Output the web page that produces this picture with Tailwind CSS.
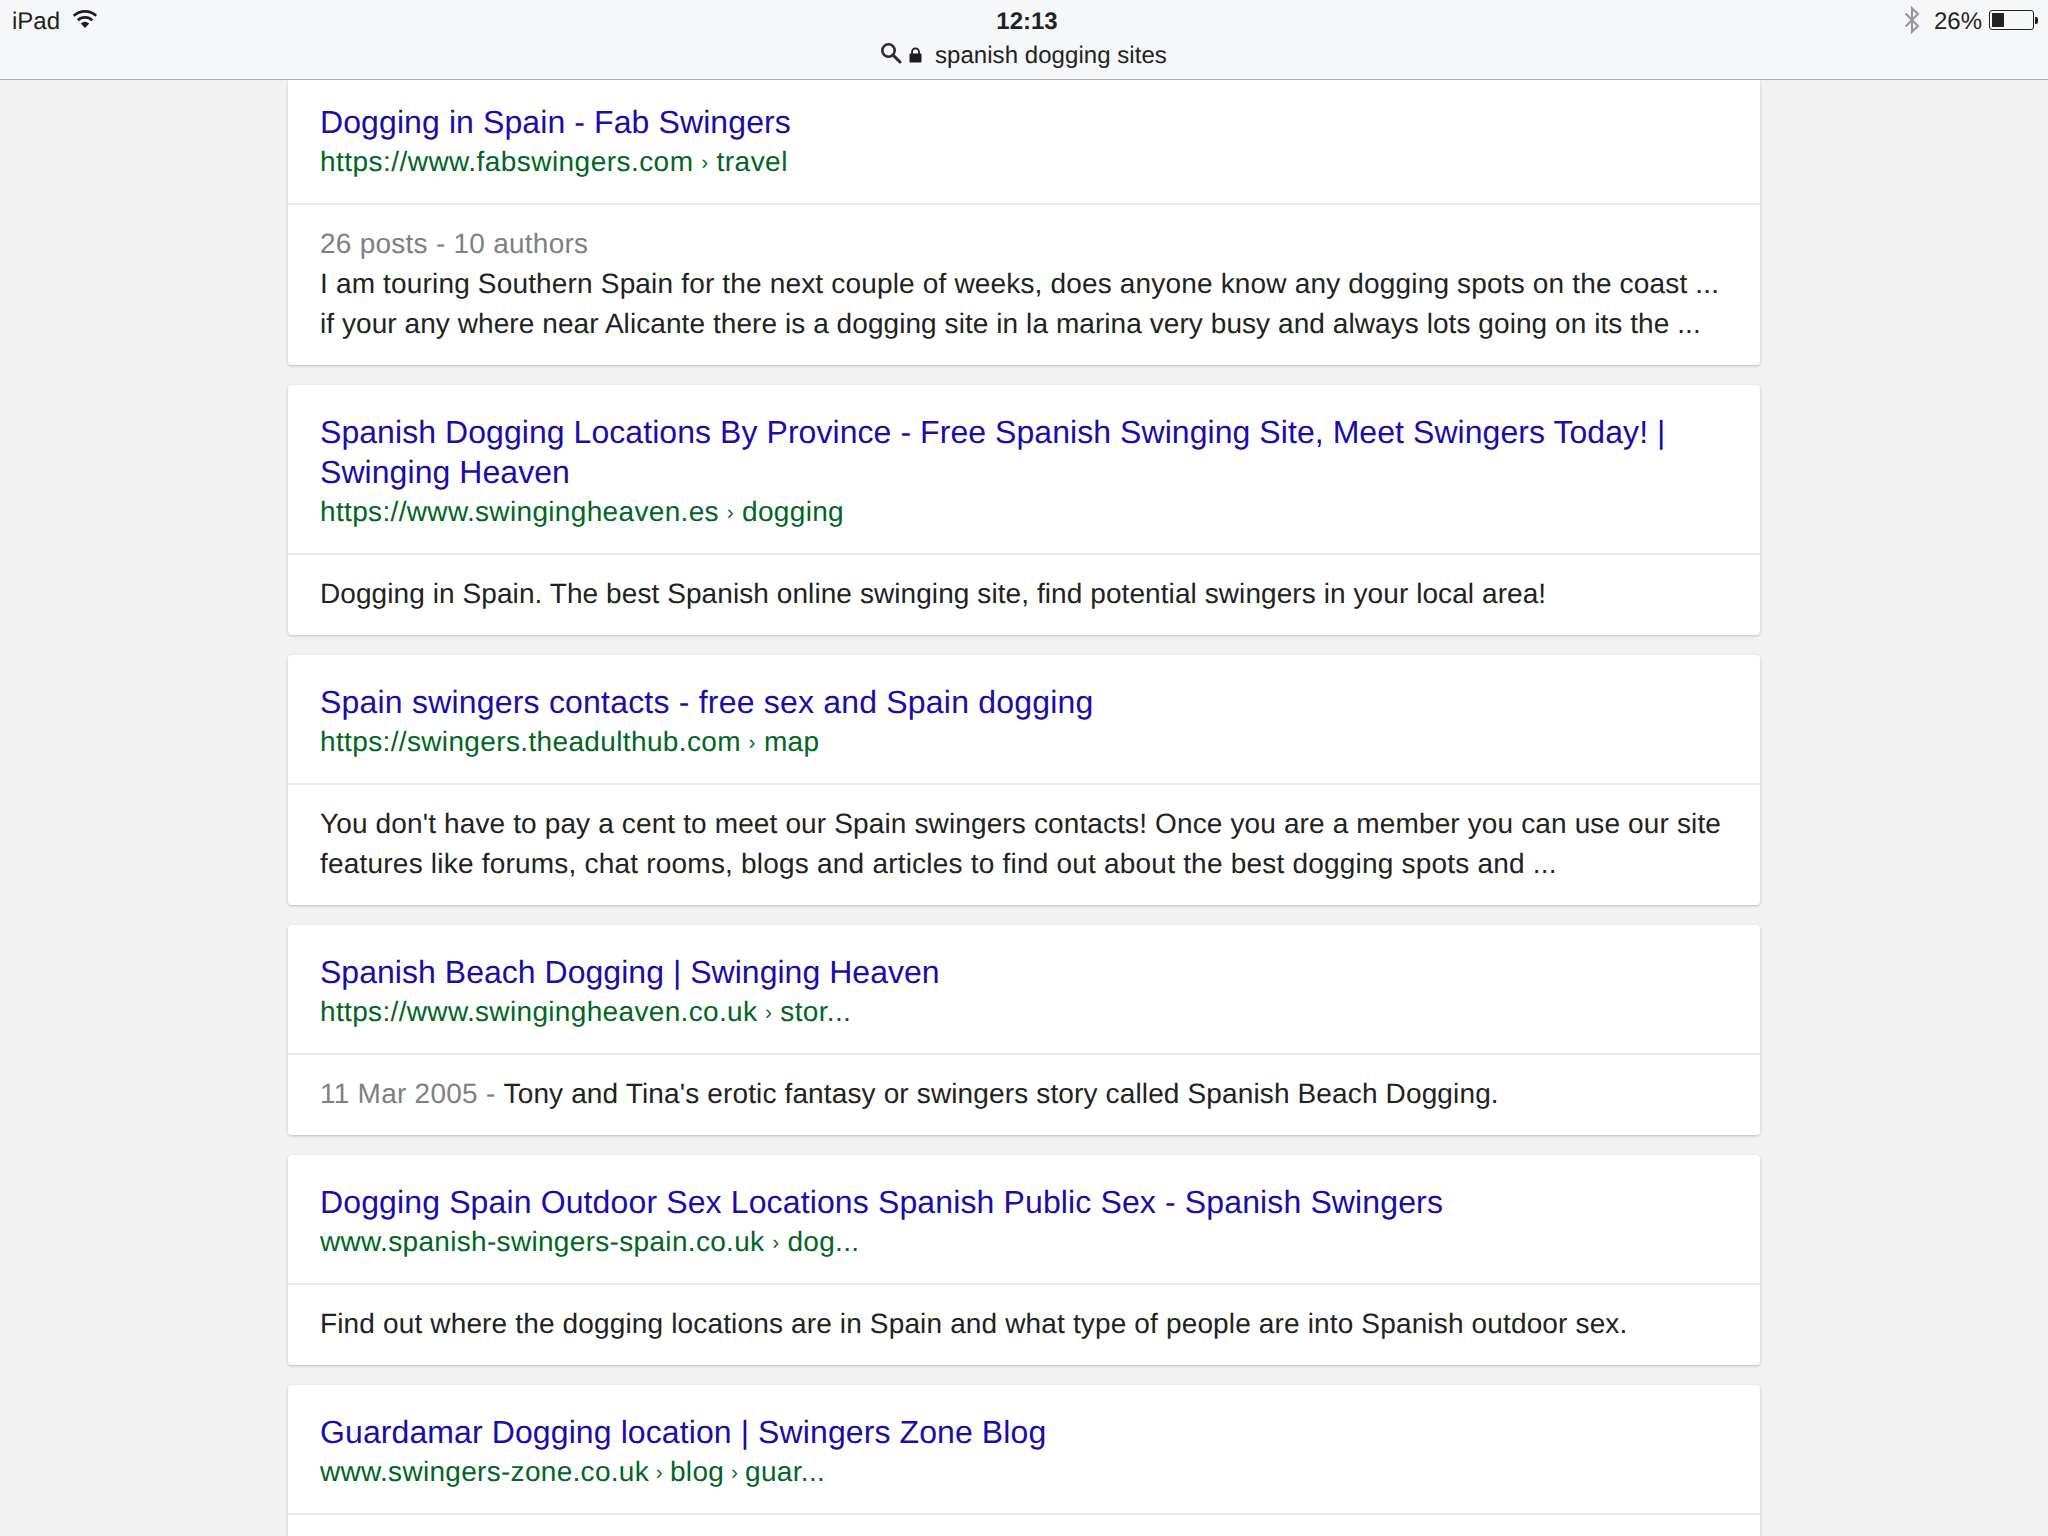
<!DOCTYPE html>
<html><head><meta charset="utf-8"><script src="https://cdn.jsdelivr.net/npm/@tailwindcss/browser@4"></script></head>
<body class="m-0">
<div class="w-[2048px] h-[1536px] overflow-hidden bg-[#f2f2f2] flex flex-col font-['Liberation_Sans',Arial,sans-serif] text-[28px] leading-[40px] text-[#222222] [text-rendering:geometricPrecision]">
<header class="relative shrink-0 h-[80px] bg-[#f6f7f8] border-b border-[#aeaeb0]">
  <div class="absolute left-[12px] top-[2px] flex items-center gap-[12px] text-[24px] leading-[40px]"><span>iPad</span>
    <svg class="mb-[6px]" width="26" height="20" viewBox="0 0 26 20"><path d="M13 19 L8.8 14.5 A6.5 6.5 0 0 1 17.2 14.5 Z" fill="#1d1d1f"/><path d="M5.8 11.2 A10.5 10.5 0 0 1 20.2 11.2" fill="none" stroke="#1d1d1f" stroke-width="2.7"/><path d="M1.8 6.8 A16.5 16.5 0 0 1 24.2 6.8" fill="none" stroke="#1d1d1f" stroke-width="2.7"/></svg></div>
  <div class="absolute left-0 right-0 top-[2px] pl-[6px] text-center text-[24px] font-bold leading-[40px]">12:13</div>
  <div class="absolute left-[880px] top-[36px] flex items-center text-[24px] leading-[40px]">
    <svg class="mb-[6px]" width="22" height="22" viewBox="0 0 22 22"><circle cx="8.5" cy="8.5" r="6.2" fill="none" stroke="#2a2a2c" stroke-width="2.6"/><path d="M13 13 L20 20" stroke="#2a2a2c" stroke-width="3" stroke-linecap="round"/></svg>
    <svg class="ml-[7px] mb-[3px]" width="13" height="16" viewBox="0 0 13 16"><path d="M3 7 V4.8 A3.5 3.5 0 0 1 10 4.8 V7" fill="none" stroke="#1d1d1f" stroke-width="1.8"/><rect x="0.5" y="6.5" width="12" height="9" rx="1" fill="#1d1d1f"/></svg>
    <span class="ml-[13px] tracking-[0.05px]">spanish dogging sites</span></div>
  <div class="absolute right-[10px] top-[2px] flex items-center text-[24px] leading-[40px]">
    <svg class="mb-[4px]" width="18" height="30" viewBox="0 0 16 28"><path d="M2 8 L13.5 19.5 L8 25 V3 L13.5 8.5 L2 20" fill="none" stroke="#98989a" stroke-width="2"/></svg>
    <span class="ml-[13px]">26%</span>
    <div class="ml-[7px] mb-[4px] flex items-center"><div class="w-[45px] h-[20px] rounded-[3px] border border-[#222] p-[2px] bg-[#f6f7f8]"><div class="h-full w-[12px] bg-[#222]"></div></div><div class="ml-[1px] w-[3px] h-[7px] rounded-r-[2px] bg-[#222]"></div></div>
  </div>
</header>
<main class="w-[1472px] ml-[288px] flex flex-col gap-[20px]">
  <section class="bg-white rounded-b-[4px] shadow-[0_1px_3px_rgba(0,0,0,0.22)]">
    <div class="px-[32px] pt-[22px] pb-[21px] border-b-2 border-[#ebebeb]"><a class="block text-[#1a0dab] text-[32px] tracking-[0.1px]">Dogging in Spain - Fab Swingers</a><div class="text-[#006621] tracking-[0.46px]">https://www.fabswingers.com<span class="text-[20px] leading-[0] align-[2px] mx-[8px]">›</span>travel</div></div>
    <div class="px-[32px] pt-[19px] pb-[21px]"><div class="text-[#808080] tracking-[0.25px]">26 posts - 10 authors</div><p class="tracking-[0.17px]">I am touring Southern Spain for the next couple of weeks, does anyone know any dogging spots on the coast ...</p><p class="tracking-[0.07px]">if your any where near Alicante there is a dogging site in la marina very busy and always lots going on its the ...</p></div>
  </section>
  <section class="bg-white rounded-[4px] shadow-[0_1px_3px_rgba(0,0,0,0.22)]">
    <div class="px-[32px] pt-[27px] pb-[21px] border-b-2 border-[#ebebeb]"><a class="block text-[#1a0dab] text-[32px] tracking-[0.06px]">Spanish Dogging Locations By Province - Free Spanish Swinging Site, Meet Swingers Today! | Swinging Heaven</a><div class="text-[#006621] tracking-[0.34px]">https://www.swingingheaven.es<span class="text-[20px] leading-[0] align-[2px] mx-[8px]">›</span>dogging</div></div>
    <div class="px-[32px] pt-[19px] pb-[21px]"><p class="tracking-[0.08px]">Dogging in Spain. The best Spanish online swinging site, find potential swingers in your local area!</p></div>
  </section>
  <section class="bg-white rounded-[4px] shadow-[0_1px_3px_rgba(0,0,0,0.22)]">
    <div class="px-[32px] pt-[27px] pb-[21px] border-b-2 border-[#ebebeb]"><a class="block text-[#1a0dab] text-[32px] tracking-[0.2px]">Spain swingers contacts - free sex and Spain dogging</a><div class="text-[#006621] tracking-[0.36px]">https://swingers.theadulthub.com<span class="text-[20px] leading-[0] align-[2px] mx-[8px]">›</span>map</div></div>
    <div class="px-[32px] pt-[19px] pb-[21px]"><p class="tracking-[0.135px]">You don't have to pay a cent to meet our Spain swingers contacts! Once you are a member you can use our site</p><p class="tracking-[0.21px]">features like forums, chat rooms, blogs and articles to find out about the best dogging spots and ...</p></div>
  </section>
  <section class="bg-white rounded-[4px] shadow-[0_1px_3px_rgba(0,0,0,0.22)]">
    <div class="px-[32px] pt-[27px] pb-[21px] border-b-2 border-[#ebebeb]"><a class="block text-[#1a0dab] text-[32px] tracking-[0.03px]">Spanish Beach Dogging | Swinging Heaven</a><div class="text-[#006621] tracking-[0.34px]">https://www.swingingheaven.co.uk<span class="text-[20px] leading-[0] align-[2px] mx-[8px]">›</span>stor...</div></div>
    <div class="px-[32px] pt-[19px] pb-[21px]"><p class="tracking-[0.14px]"><span class="text-[#808080] tracking-[0.25px]">11 Mar 2005 - </span>Tony and Tina's erotic fantasy or swingers story called Spanish Beach Dogging.</p></div>
  </section>
  <section class="bg-white rounded-[4px] shadow-[0_1px_3px_rgba(0,0,0,0.22)]">
    <div class="px-[32px] pt-[27px] pb-[21px] border-b-2 border-[#ebebeb]"><a class="block text-[#1a0dab] text-[32px] tracking-[0.13px]">Dogging Spain Outdoor Sex Locations Spanish Public Sex - Spanish Swingers</a><div class="text-[#006621] tracking-[0.32px]">www.spanish-swingers-spain.co.uk<span class="text-[20px] leading-[0] align-[2px] mx-[8px]">›</span>dog...</div></div>
    <div class="px-[32px] pt-[19px] pb-[21px]"><p class="tracking-[0.15px]">Find out where the dogging locations are in Spain and what type of people are into Spanish outdoor sex.</p></div>
  </section>
  <section class="bg-white rounded-t-[4px] h-[200px] shadow-[0_1px_3px_rgba(0,0,0,0.22)]">
    <div class="px-[32px] pt-[27px] pb-[21px] border-b-2 border-[#ebebeb]"><a class="block text-[#1a0dab] text-[32px] tracking-[0.1px]">Guardamar Dogging location | Swingers Zone Blog</a><div class="text-[#006621] tracking-[0.3px]">www.swingers-zone.co.uk<span class="text-[20px] leading-[0] align-[2px] mx-[7px]">›</span>blog<span class="text-[20px] leading-[0] align-[2px] mx-[7px]">›</span>guar...</div></div>
  </section>
</main>
</div>
</body></html>
